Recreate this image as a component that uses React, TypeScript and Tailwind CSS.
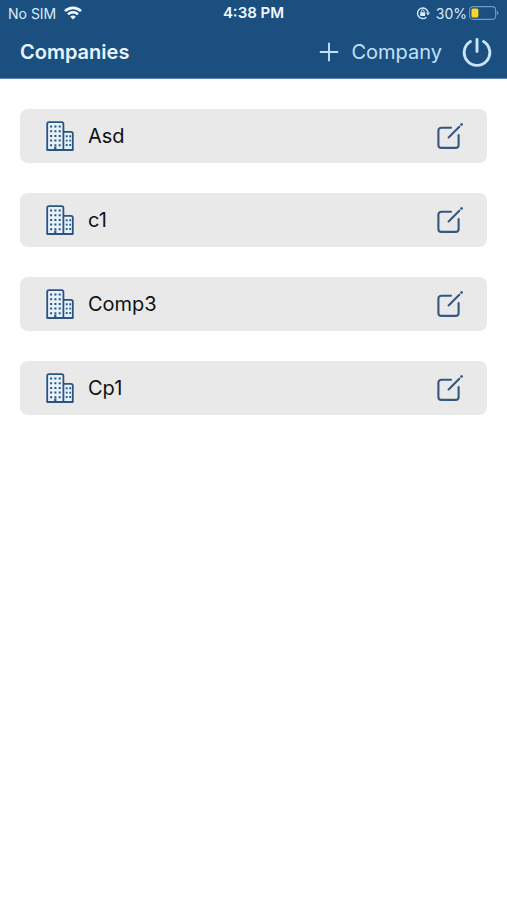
const companies = ["Asd", "c1", "Comp3", "Cp1"];

const WifiIcon = () => (
  <svg viewBox="0 0 18 14" className="h-3.5 w-[18px]" fill="none" stroke="#f0f9ff" strokeWidth="2.6">
    <path d="M1 5.2C5.4.7 12.6.7 17 5.2" />
    <path d="M4 8.4c2.8-2.8 7.2-2.8 10 0" />
    <path d="M9 13.5 6.2 10.7c1.6-1.5 4-1.5 5.6 0Z" fill="#f0f9ff" stroke="none" />
  </svg>
);

const RotationLockIcon = () => (
  <svg viewBox="0 0 14 14" className="h-3.5 w-3.5" fill="none" stroke="#d9ecfb">
    <path d="M10.4 11.2A5.3 5.3 0 1 1 12 6.2" strokeWidth="1.4" />
    <path d="M10 6.6h4l-2 2.8Z" fill="#d9ecfb" stroke="none" />
    <rect x="4.2" y="6.3" width="5" height="3.7" rx=".5" fill="#d9ecfb" stroke="none" />
    <path d="M5.3 6.5V5.3a1.4 1.4 0 0 1 2.8 0v1.2" strokeWidth="1" />
  </svg>
);

const BatteryIcon = () => (
  <svg viewBox="0 0 30 14" className="h-3.5 w-[30px]">
    <rect x=".6" y=".6" width="26" height="12.8" rx="3.4" fill="none" stroke="#6f9cc4" strokeWidth="1.1" />
    <rect x="2.4" y="2.4" width="7" height="9.2" rx="1.6" fill="#fcd61c" />
    <path d="M27.8 4.8c2 .7 2 3.7 0 4.4Z" fill="#6f9cc4" />
  </svg>
);

const PlusIcon = () => (
  <svg viewBox="0 0 20 20" className="h-5 w-5" stroke="#c3e0fa" strokeWidth="1.9">
    <path d="M10 .8v18.4M.8 10h18.4" />
  </svg>
);

const PowerIcon = () => (
  <svg
    viewBox="0 0 30 30"
    className="h-[30px] w-[30px]"
    fill="none"
    stroke="#c9e4fb"
    strokeWidth="2.9"
    strokeLinecap="round"
  >
    <path d="M15 2.4v12.2" />
    <path d="M8.4 4.6a12.8 12.8 0 1 0 13.2 0" />
  </svg>
);

const BuildingIcon = () => (
  <svg viewBox="0 0 28 30" className="h-[30px] w-7" fill="none" stroke="#2a5583" strokeWidth="1.8">
    <path
      d="M1.2 29V3Q1.2 1.2 3 1.2H15.6Q17.4 1.2 17.4 3V29ZM17.4 10.8H25Q26.8 10.8 26.8 12.6V29H17.4Z"
      fill="#e6f1fb"
      strokeLinejoin="round"
    />
    <path
      d="M4.1 5.5h10.6M4.1 10.2h10.6M4.1 14.9h10.6M4.1 19.6h10.6M4.1 24.3h10.6"
      strokeWidth="2"
      strokeDasharray="2 2.3"
    />
    <path d="M19.8 15.2h5.4M19.8 19.6h5.4M19.8 24h5.4" strokeWidth="1.9" strokeDasharray="1.8 1.7" />
    <path d="M9.3 25.6v3.6" strokeWidth="2.2" />
  </svg>
);

const EditIcon = () => (
  <svg
    viewBox="0 0 26 28"
    className="h-7 w-[26px]"
    fill="none"
    stroke="#36587f"
    strokeWidth="2.1"
    strokeLinecap="round"
    strokeLinejoin="round"
  >
    <path d="M14 5.7H4.4a3 3 0 0 0-3 3v14.2a3 3 0 0 0 3 3h14.2a3 3 0 0 0 3-3v-9.8" />
    <path d="M11.6 15.4 22.3 4.7" />
    <path d="m24.5 2.5.1-.1" strokeWidth="2.6" />
  </svg>
);

const StatusBar = () => (
  <div className="grid h-[26px] grid-cols-3 items-center px-2 text-[14px] text-[#d9ecfb]">
    <div className="flex items-center gap-2">
      No SIM
      <WifiIcon />
    </div>
    <div className="text-center text-[15px] font-semibold text-[#f0f9ff]">4:38 PM</div>
    <div className="flex items-center justify-end">
      <RotationLockIcon />
      <span className="mr-0.5 ml-1.5">30%</span>
      <BatteryIcon />
    </div>
  </div>
);

const CompanyRow = ({ name }: { name: string }) => (
  <li className="flex h-[54px] items-center rounded-lg bg-[#e9e9e9] pr-6 pl-[26px]">
    <BuildingIcon />
    <span className="ml-3.5 flex-1 text-[20px] text-[#111111]">{name}</span>
    <button type="button" aria-label={`Edit ${name}`}>
      <EditIcon />
    </button>
  </li>
);

const App = () => {
  return (
    <div className="min-h-screen bg-white font-['Inter',sans-serif]">
      <header className="border-b border-[#5f88b0] bg-[#1b4f80]">
        <StatusBar />
        <div className="flex h-[52px] items-center pr-[15px] pl-5">
          <h1 className="flex-1 text-[20px] font-semibold text-[#e8f5ff]">Companies</h1>
          <button type="button" className="flex items-center gap-3 text-[20px] text-[#c3e0fa]">
            <PlusIcon />
            Company
          </button>
          <button type="button" aria-label="Log out" className="ml-5">
            <PowerIcon />
          </button>
        </div>
      </header>

      <ul className="flex flex-col gap-[30px] px-5 py-[30px]">
        {companies.map((name) => (
          <CompanyRow key={name} name={name} />
        ))}
      </ul>
    </div>
  );
};

export default App;
